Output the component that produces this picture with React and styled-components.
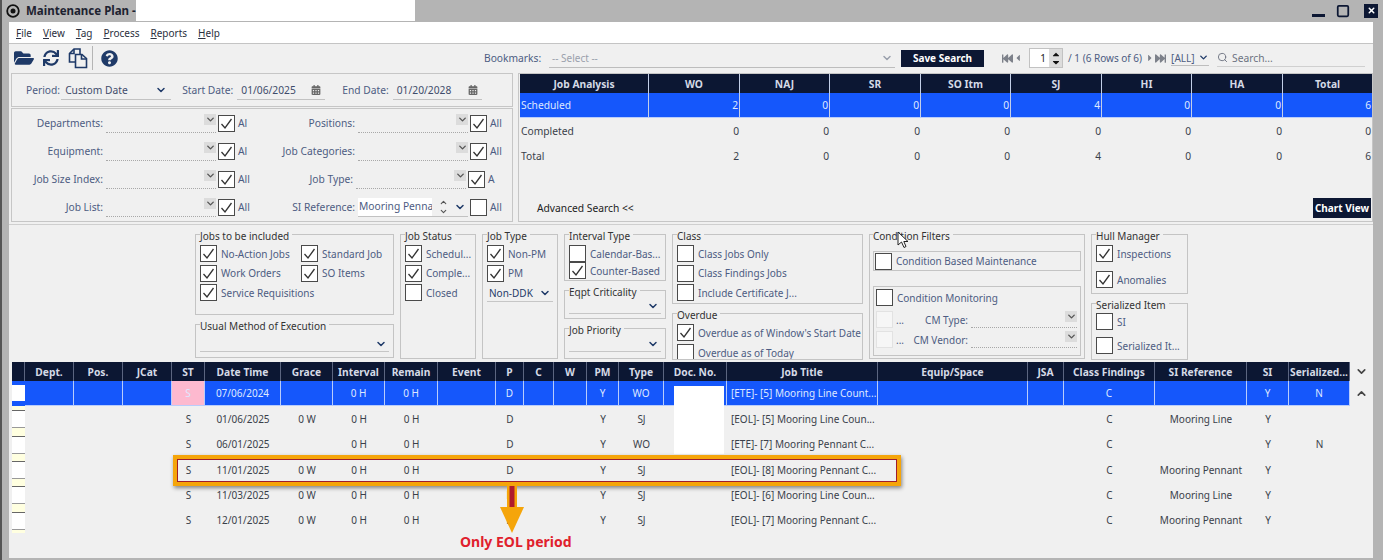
import React from "react";
import styled, { createGlobalStyle } from "styled-components";
import { FaFolderOpen, FaSync, FaQuestionCircle, FaCalendarAlt, FaFastBackward, FaFastForward, FaCaretLeft, FaCaretRight, FaCaretUp, FaCaretDown } from "react-icons/fa";
import { ChevronDown, ChevronUp, Search, Square, X } from "lucide-react";

const GlobalStyle = createGlobalStyle`
  html, body { margin: 0; padding: 0; background: #b4b4b4; }
  body { font-family: "Noto Sans", Arial, sans-serif; font-size: 10.25px; color: #3a3f4a; overflow: hidden; }
  * { box-sizing: border-box; }
`;

const NAVY = "#0c1733";
const LABEL = "#4d5c82";
const BLUE = "#1557fb";

const Page = styled.div`
  position: relative;
  width: 1383px;
  height: 560px;
  padding-left: 2px;
  background: #b4b4b4;
  box-shadow: inset 2px 0 0 #555;
  display: flex;
  flex-direction: column;
  overflow: hidden;
`;

const TitleBar = styled.div`
  height: 21px;
  display: flex;
  align-items: center;
  padding-left: 4px;
  font-weight: 700;
  font-size: 11.5px;
  color: #1d2230;
`;

const TitleText = styled.span`
  margin-left: 6px;
  width: 110px;
  white-space: nowrap;
`;

const Redacted = styled.div`
  width: 279px;
  height: 21px;
  background: #fff;
`;

const WindowButtons = styled.div`
  margin-left: auto;
  display: flex;
  align-items: center;
  color: ${NAVY};
`;

const MinButton = styled.div`
  width: 13px;
  height: 3px;
  margin: 9px 11px 0 0;
  background: ${NAVY};
`;

const CloseBtn = styled.div`
  width: 14px;
  height: 14px;
  background: ${NAVY};
  color: #fff;
  display: flex;
  align-items: center;
  justify-content: center;
  margin: 0 5px 0 14px;
`;

const Body = styled.div`
  flex: 1;
  margin: 1px 10px 2px 7px;
  background: #f0f0f0;
  display: flex;
  flex-direction: column;
  min-height: 0;
`;

const MenuBar = styled.div`
  height: 22px;
  flex-shrink: 0;
  background: #fff;
  display: flex;
  align-items: center;
  gap: 11px;
  padding-left: 7px;
  border-bottom: 1px solid #c4c4c4;
  color: #2b3040;
  font-size: 10px;
`;

const MenuItem = styled.span`
  &::first-letter { text-decoration: underline; }
`;

const Toolbar = styled.div`
  height: 28px;
  flex-shrink: 0;
  display: flex;
  align-items: center;
  padding-left: 4px;
  color: #1f3a68;
`;

const ToolIcon = styled.div`
  width: ${({ $w }) => $w}px;
  display: flex;
  align-items: center;
  justify-content: center;
`;

const ToolSep = styled.div`
  width: 1px;
  height: 24px;
  background: #b5b5b5;
  margin: 0 7px 0 3px;
`;

const BookmarkLabel = styled.span`
  margin-left: 366px;
  color: ${LABEL};
  width: 56px;
`;

const BookmarkSelect = styled.div`
  width: 346px;
  height: 20px;
  margin-left: 9px;
  display: flex;
  align-items: center;
  justify-content: space-between;
  padding: 0 2px 0 3px;
  border-bottom: 1px solid #bdbdbd;
  color: #9aa0ac;
  font-size: 10px;
`;

const NavyButton = styled.button`
  background: ${NAVY};
  color: #fff;
  border: none;
  font: 700 10px "Noto Sans", Arial, sans-serif;
  padding: 0;
  display: block;
  white-space: nowrap;
`;

const SaveButton = styled(NavyButton)`
  width: 83px;
  height: 17px;
  margin-left: 6px;
`;

const Pager = styled.div`
  display: flex;
  align-items: center;
  margin-left: 18px;
  color: #7d818a;
  white-space: nowrap;
`;

const PagerText = styled.span`
  color: ${LABEL};
  font-size: 10px;
`;

const PageSpin = styled.div`
  width: 34px;
  height: 20px;
  margin: 0 5px 0 6px;
  background: #fff;
  border: 1px solid #c2c2c2;
  display: flex;
  align-items: center;
  justify-content: flex-end;
  color: #222;
  font-size: 10px;
`;

const SpinArrows = styled.div`
  display: flex;
  flex-direction: column;
  width: 13px;
  height: 100%;
  margin-left: 3px;
  align-items: center;
  justify-content: center;
  line-height: 0;
  background: #dcdcdc;
`;

const AllSelect = styled.div`
  width: 38px;
  margin-left: 5px;
  display: flex;
  align-items: center;
  justify-content: space-between;
  border-bottom: 1px solid #bdbdbd;
  color: ${LABEL};
  font-size: 10px;
`;

const AllChevron = styled.span`
  display: flex;
  color: #1f3a68;
`;

const SearchBox = styled.div`
  width: 148px;
  height: 18px;
  margin-left: 8px;
  display: flex;
  align-items: center;
  gap: 4px;
  border-bottom: 1px solid #d0d0d0;
  color: #6c7280;
`;

const TopSection = styled.div`
  height: 153px;
  flex-shrink: 0;
  display: flex;
  align-items: flex-start;
  padding: 1px 0 0 2px;
  gap: 5px;
  border-bottom: 1px solid #cfcfcf;
`;

const LeftColumn = styled.div`
  width: 502px;
  flex-shrink: 0;
  display: flex;
  flex-direction: column;
  gap: 1px;
`;

const PeriodPanel = styled.div`
  height: 34px;
  border: 1px solid #c6c6c6;
  display: flex;
  align-items: center;
  padding-left: 14px;
  color: ${LABEL};
  white-space: nowrap;
`;

const UnderlineField = styled.div`
  width: ${({ $w }) => $w}px;
  margin: 0 ${({ $after }) => $after || 0}px 0 ${({ $before }) => $before ?? 4}px;
  height: 19px;
  display: flex;
  align-items: center;
  justify-content: space-between;
  padding: 0 4px;
  border-bottom: 1px solid #c2c2c2;
  color: #3f4c6b;
`;

const FilterPanel = styled.div`
  height: 114px;
  border: 1px solid #c6c6c6;
  display: grid;
  grid-auto-rows: 28px;
`;

const FilterRow = styled.div`
  display: flex;
  align-items: center;
`;

const Pair = styled.div`
  width: ${({ $w }) => $w}px;
  display: flex;
  align-items: center;
  white-space: nowrap;
`;

const FilterLabel = styled.span`
  width: ${({ $w }) => $w}px;
  text-align: right;
  color: ${LABEL};
  flex-shrink: 0;
`;

const Combo = styled.div`
  width: 110px;
  height: 19px;
  margin: 0 2px 0 3px;
  display: flex;
  justify-content: flex-end;
  border-bottom: 1px dotted #a8a8a8;
  flex-shrink: 0;
`;

const ChevronChip = styled.div`
  width: 12px;
  height: 11px;
  background: #dcdcdc;
  color: #555;
  display: flex;
  align-items: center;
  justify-content: center;
`;

const RefInput = styled.div`
  width: 110px;
  height: 19px;
  margin: 0 2px 0 3px;
  display: flex;
  align-items: center;
  border-bottom: 1px solid #c2c2c2;
  color: #1f3a68;
  flex-shrink: 0;
`;

const RefText = styled.div`
  width: 74px;
  height: 18px;
  background: #fff;
  color: ${LABEL};
  line-height: 16px;
  padding-left: 1px;
  overflow: hidden;
`;

const RefSpin = styled.div`
  width: 22px;
  display: flex;
  flex-direction: column;
  align-items: center;
  color: #555;
  line-height: 0;
`;

const Box = styled.span`
  width: 17px;
  height: 17px;
  flex-shrink: 0;
  background: ${({ $off }) => ($off ? "#f6f6f6" : "#fff")};
  border: 1px solid ${({ $off }) => ($off ? "#e2e2e2" : "#4a4a4a")};
  display: inline-flex;
  align-items: center;
  justify-content: center;
`;

const Check = ({ on, off }) => (
  <Box $off={off}>
    {on && (
      <svg width="13" height="13" viewBox="0 0 13 13">
        <path d="M1.5 7 L5 11 L11.5 2" fill="none" stroke="#333" strokeWidth="1.3" />
      </svg>
    )}
  </Box>
);

const AllText = styled.span`
  margin-left: ${({ $gap }) => $gap ?? 3}px;
  color: ${LABEL};
`;

const JobPanel = styled.div`
  width: 855px;
  height: 149px;
  border: 1px solid #c6c6c6;
  padding: 0 0 0 1px;
  display: flex;
  flex-direction: column;
`;

const AnalysisRow = styled.div`
  display: grid;
  grid-template-columns: 129px 91px 90px 91px 90px 91px 90px 91px 89px;
  height: ${({ $h }) => $h}px;
  background: ${({ $bg }) => $bg || "transparent"};
  color: ${({ $color }) => $color || "#3a3f4a"};
  ${({ $bar }) => $bar && `border-bottom: 1px solid #b9cdfb;`}
`;

const AnalysisCell = styled.div`
  display: flex;
  align-items: center;
  justify-content: ${({ $align }) => $align};
  font-weight: ${({ $bold }) => ($bold ? 700 : 400)};
  padding: 0 1px;
  border-right: ${({ $line }) => ($line ? "1px solid #c3cfe8" : "none")};
`;

const AnalysisFoot = styled.div`
  margin-top: auto;
  height: 23px;
  display: flex;
  align-items: center;
  justify-content: space-between;
  padding: 0 1px 3px 17px;
  color: #222;
`;

const ChartButton = styled(NavyButton)`
  width: 58px;
  height: 20px;
`;

const FilterSection = styled.div`
  height: 137px;
  flex-shrink: 0;
  padding-left: 186px;
  display: flex;
  gap: 6px;
  overflow: hidden;
`;

const Column = styled.div`
  width: ${({ $w }) => $w}px;
  flex-shrink: 0;
  display: flex;
  flex-direction: column;
`;

const Group = styled.fieldset`
  margin: 0;
  padding: 0 ${({ $pad }) => $pad ?? 4}px;
  min-width: 0;
  width: ${({ $w }) => ($w ? `${$w}px` : "100%")};
  height: ${({ $h }) => $h}px;
  border: 1px solid #c4c4c4;
  flex-shrink: 0;
  overflow: hidden;
  & > legend {
    padding: 4px 3px 0 0;
    font-size: 10px;
    line-height: 14px;
    color: #333;
    white-space: nowrap;
  }
`;

const CheckRows = styled.div`
  display: grid;
  grid-template-columns: ${({ $cols }) => $cols || "1fr"};
  row-gap: ${({ $gap }) => $gap ?? 2.5}px;
  margin-top: ${({ $top }) => $top ?? 2}px;
`;

const CheckItem = styled.div`
  display: flex;
  align-items: center;
  gap: 4px;
  color: ${LABEL};
  white-space: nowrap;
  font-size: 10px;
  ${({ $wide }) => $wide && `grid-column: 1 / -1;`}
`;

const GroupSelect = styled.div`
  height: 15px;
  margin-top: ${({ $top }) => $top || 0}px;
  display: flex;
  align-items: center;
  justify-content: ${({ $between }) => ($between ? "space-between" : "flex-end")};
  border-bottom: 1px solid #c6c6c6;
  color: #1f3a68;
  font-size: 10px;
  padding: 0 2px 1px;
`;

const InnerBox = styled.div`
  border: 1px solid #c4c4c4;
  height: ${({ $h }) => $h}px;
  margin-top: ${({ $top }) => $top || 0}px;
  display: ${({ $flex }) => ($flex ? "flex" : "block")};
  align-items: center;
  gap: 4px;
  padding: ${({ $pad }) => $pad || 0};
  color: ${LABEL};
  font-size: 10px;
`;

const CmRow = styled.div`
  display: flex;
  align-items: center;
  margin-top: ${({ $top }) => $top || 0}px;
`;

const CmLabel = styled.span`
  width: 57px;
  flex-shrink: 0;
  text-align: right;
  margin-right: 3px;
  white-space: nowrap;
`;

const CmDots = styled.span`
  margin-left: 3px;
  width: 15px;
  flex-shrink: 0;
`;

const CmCombo = styled.div`
  width: 106px;
  height: 17px;
  flex-shrink: 0;
  display: flex;
  justify-content: flex-end;
  border-bottom: 1px dotted #a8a8a8;
`;

const GridWrap = styled.div`
  flex: 1;
  margin-left: 3px;
  display: flex;
  min-height: 0;
`;

const GridMain = styled.div`
  width: 1339px;
`;

const Row = styled.div`
  display: grid;
  grid-template-columns: 13px 49px 49px 49px 33px 76px 52px 52px 53px 58px 28px 30px 33px 32px 45px 63px 151px 150px 36px 91px 92px 42px 61px;
  height: ${({ $h }) => $h};
  background: ${({ $bg }) => $bg || "transparent"};
  color: ${({ $color }) => $color || "#3a3f4a"};
`;

const HeadCell = styled.div`
  display: flex;
  align-items: center;
  justify-content: center;
  font-weight: 700;
  font-size: 10.25px;
  color: #d5dae6;
  white-space: nowrap;
  overflow: hidden;
  border-right: 1px solid #5b6580;
`;

const Cell = styled.div`
  display: flex;
  align-items: center;
  justify-content: ${({ $left }) => ($left ? "flex-start" : "center")};
  padding-left: ${({ $left }) => ($left ? 4 : 0)}px;
  white-space: nowrap;
  font-size: 10px;
  background: ${({ $bg }) => $bg || "transparent"};
  border-right: ${({ $sel }) => ($sel ? "1px solid #b9cdfb" : "none")};
  border-bottom: ${({ $sel }) => ($sel ? "1px solid #b9cdfb" : "none")};
`;

const RowMark = styled.div`
  background: ${({ $sel }) =>
    $sel
      ? `linear-gradient(#1557fb 0 4px, #fff 4px 20px, #1557fb 20px)`
      : `linear-gradient(#ffffe0 0 4px, #666 4px 5px, #fff 5px 21px, #999 21px 22px, #ffffe0 22px)`};
`;

const ScrollColumn = styled.div`
  width: 23px;
  display: flex;
  flex-direction: column;
  color: #444;
`;

const ScrollBtn = styled.div`
  height: ${({ $h }) => $h}px;
  display: flex;
  align-items: center;
  justify-content: center;
`;

const Highlight = styled.div`
  position: absolute;
  left: 173px;
  top: 455px;
  width: 728px;
  height: 31px;
  border: 4px solid #f5a50a;
  outline: 1px solid #a01c2c;
  outline-offset: -5px;
  box-shadow: 1px 2px 4px rgba(0, 0, 0, 0.45);
`;

const ArrowMark = styled.svg`
  position: absolute;
  left: 498px;
  top: 486px;
`;

const Callout = styled.div`
  position: absolute;
  left: 460px;
  top: 532px;
  color: #e0202c;
  font-weight: 700;
  font-size: 14px;
  line-height: 20px;
  white-space: nowrap;
`;

const Whiteout = styled.div`
  position: absolute;
  left: 674px;
  top: 386px;
  width: 50px;
  height: 68px;
  background: #fff;
`;

const Cursor = styled.svg`
  position: absolute;
  left: 897px;
  top: 231px;
`;

const chev = (size = 12) => <ChevronDown size={size} strokeWidth={3} />;

const CopyIcon = () => (
  <svg width="20" height="22" viewBox="0 0 20 22" fill="none" stroke="#1f3a68" strokeWidth="1.600">
    <path d="M7 15H1.500V6.500L6 2H12V7" />
    <path d="M6 2V6.500H1.500" />
    <path d="M7.500 7.500H14L18.500 11.500V20.500H7.500Z" />
    <path d="M13.500 7.500V12H18.500" />
  </svg>
);

const analysisHead = ["Job Analysis", "WO", "NAJ", "SR", "SO Itm", "SJ", "HI", "HA", "Total"];
const analysisRows = [
  ["Scheduled", 2, 0, 0, 0, 4, 0, 0, 6],
  ["Completed", 0, 0, 0, 0, 0, 0, 0, 0],
  ["Total", 2, 0, 0, 0, 4, 0, 0, 6],
];

const columns = ["", "Dept.", "Pos.", "JCat", "ST", "Date Time", "Grace", "Interval", "Remain", "Event", "P", "C", "W", "PM", "Type", "Doc. No.", "Job Title", "Equip/Space", "JSA", "Class Findings", "SI Reference", "SI", "Serialized..."];

const rows = [
  { date: "07/06/2024", grace: "", type: "WO", title: "[ETE]- [5] Mooring Line Count...", ref: "", ser: "N" },
  { date: "01/06/2025", grace: "0 W", type: "SJ", title: "[EOL]- [5] Mooring Line Coun...", ref: "Mooring Line", ser: "" },
  { date: "06/01/2025", grace: "", type: "WO", title: "[ETE]- [7] Mooring Pennant C...", ref: "", ser: "N" },
  { date: "11/01/2025", grace: "0 W", type: "SJ", title: "[EOL]- [8] Mooring Pennant C...", ref: "Mooring Pennant", ser: "" },
  { date: "11/03/2025", grace: "0 W", type: "SJ", title: "[EOL]- [6] Mooring Line Coun...", ref: "Mooring Line", ser: "" },
  { date: "12/01/2025", grace: "0 W", type: "SJ", title: "[EOL]- [7] Mooring Pennant C...", ref: "Mooring Pennant", ser: "" },
];

const FilterPair = ({ label, w, text, on = true, pairW }) => (
  <Pair $w={pairW}>
    <FilterLabel $w={w}>{label}</FilterLabel>
    <Combo><ChevronChip>{chev(11)}</ChevronChip></Combo>
    <Check on={on} />
    <AllText>{text}</AllText>
  </Pair>
);

const Item = ({ label, on, wide }) => (
  <CheckItem $wide={wide}><Check on={on} />{label}</CheckItem>
);

const App = () => {
  return (
    <Page>
      <GlobalStyle />
      <TitleBar>
        <svg width="14" height="14" viewBox="0 0 14 14">
          <circle cx="7" cy="7" r="5.800" fill="none" stroke="#111" strokeWidth="1.800" />
          <circle cx="7" cy="7" r="2.500" fill="#111" />
        </svg>
        <TitleText>Maintenance Plan -</TitleText>
        <Redacted />
        <WindowButtons>
          <MinButton />
          <Square size={14} strokeWidth={3} />
          <CloseBtn><X size={9} strokeWidth={4} /></CloseBtn>
        </WindowButtons>
      </TitleBar>
      <Body>
        <MenuBar>
          {["File", "View", "Tag", "Process", "Reports", "Help"].map((m) => (
            <MenuItem key={m}>{m}</MenuItem>
          ))}
        </MenuBar>
        <Toolbar>
          <ToolIcon $w={22}><FaFolderOpen size={20} /></ToolIcon>
          <ToolIcon $w={32}><FaSync size={16} /></ToolIcon>
          <ToolIcon $w={22}><CopyIcon /></ToolIcon>
          <ToolSep />
          <ToolIcon $w={18}><FaQuestionCircle size={17} /></ToolIcon>
          <BookmarkLabel>Bookmarks:</BookmarkLabel>
          <BookmarkSelect>-- Select --{chev(12)}</BookmarkSelect>
          <SaveButton>Save Search</SaveButton>
          <Pager>
            <FaFastBackward size={11} />
            <FaCaretLeft size={10} />
            <PageSpin>
              1
              <SpinArrows><FaCaretUp size={12} style={{ marginBottom: -3, color: "#111" }} /><FaCaretDown size={12} style={{ color: "#111" }} /></SpinArrows>
            </PageSpin>
            <PagerText>/ 1 (6 Rows of 6)</PagerText>
            <FaCaretRight size={10} style={{ marginLeft: 3 }} />
            <FaFastForward size={11} />
            <AllSelect>[ALL]<AllChevron>{chev(11)}</AllChevron></AllSelect>
          </Pager>
          <SearchBox><Search size={11} />Search...</SearchBox>
        </Toolbar>
        <TopSection>
          <LeftColumn>
            <PeriodPanel>
              Period:
              <UnderlineField $w={110} $after={11} $before={1}>Custom Date<ChevronDown size={12} strokeWidth={3} color="#1f3a68" /></UnderlineField>
              Start Date:
              <UnderlineField $w={88} $after={17}>01/06/2025<FaCalendarAlt size={10} color="#666" /></UnderlineField>
              End Date:
              <UnderlineField $w={89}>01/20/2028<FaCalendarAlt size={10} color="#666" /></UnderlineField>
            </PeriodPanel>
            <FilterPanel>
              <FilterRow>
                <FilterPair label="Departments:" w={91} text="Al" pairW={246} />
                <FilterPair label="Positions:" w={97} text="All" pairW={250} />
              </FilterRow>
              <FilterRow>
                <FilterPair label="Equipment:" w={91} text="Al" pairW={246} />
                <FilterPair label="Job Categories:" w={97} text="All" pairW={250} />
              </FilterRow>
              <FilterRow>
                <FilterPair label="Job Size Index:" w={91} text="All" pairW={246} />
                <FilterPair label="Job Type:" w={95} text="A" pairW={250} />
              </FilterRow>
              <FilterRow>
                <FilterPair label="Job List:" w={91} text="All" pairW={246} />
                <Pair $w={250}>
                  <FilterLabel $w={97}>SI Reference:</FilterLabel>
                  <RefInput>
                    <RefText>Mooring Penna</RefText>
                    <RefSpin><ChevronUp size={9} strokeWidth={3} /><ChevronDown size={9} strokeWidth={3} /></RefSpin>
                    {chev(12)}
                  </RefInput>
                  <Check />
                  <AllText>All</AllText>
                </Pair>
              </FilterRow>
            </FilterPanel>
          </LeftColumn>
          <JobPanel>
            <AnalysisRow $h={19} $bg={NAVY} $color="#d5dae6">
              {analysisHead.map((h, i) => (
                <AnalysisCell key={h} $align="center" $bold $line={i < 8}>{h}</AnalysisCell>
              ))}
            </AnalysisRow>
            {analysisRows.map((r, ri) => (
              <AnalysisRow key={r[0]} $h={25} $bg={ri === 0 ? BLUE : undefined} $color={ri === 0 ? "#dfe8ff" : undefined} $bar={ri === 0}>
                {r.map((v, i) => (
                  <AnalysisCell key={i} $align={i === 0 ? "flex-start" : "flex-end"} $line={ri === 0 && i < 8}>{v}</AnalysisCell>
                ))}
              </AnalysisRow>
            ))}
            <AnalysisFoot>
              Advanced Search &lt;&lt;
              <ChartButton>Chart View</ChartButton>
            </AnalysisFoot>
          </JobPanel>
        </TopSection>
        <FilterSection>
          <Column $w={199}>
            <Group $h={90}>
              <legend>Jobs to be included</legend>
              <CheckRows $cols="101px 1fr">
                <Item label="No-Action Jobs" on />
                <Item label="Standard Job" on />
                <Item label="Work Orders" on />
                <Item label="SO Items" on />
                <Item label="Service Requisitions" on wide />
              </CheckRows>
            </Group>
            <Group $h={43}>
              <legend>Usual Method of Execution</legend>
              <GroupSelect $top={4}>{chev(12)}</GroupSelect>
            </Group>
          </Column>
          <Group $w={76} $h={134}>
            <legend>Job Status</legend>
            <CheckRows>
              <Item label="Schedul..." on />
              <Item label="Comple..." on />
              <Item label="Closed" />
            </CheckRows>
          </Group>
          <Group $w={76} $h={134}>
            <legend>Job Type</legend>
            <CheckRows>
              <Item label="Non-PM" on />
              <Item label="PM" on />
            </CheckRows>
            <GroupSelect $between $top={5}>Non-DDK{chev(12)}</GroupSelect>
          </Group>
          <Column $w={102}>
            <Group $h={56}>
              <legend>Interval Type</legend>
              <CheckRows $gap={0}>
                <Item label="Calendar-Bas..." />
                <Item label="Counter-Based" on />
              </CheckRows>
            </Group>
            <Group $h={38}>
              <legend>Eqpt Criticality</legend>
              <GroupSelect>{chev(12)}</GroupSelect>
            </Group>
            <Group $h={40}>
              <legend>Job Priority</legend>
              <GroupSelect>{chev(12)}</GroupSelect>
            </Group>
          </Column>
          <Column $w={191}>
            <Group $h={79}>
              <legend>Class</legend>
              <CheckRows>
                <Item label="Class Jobs Only" />
                <Item label="Class Findings Jobs" />
                <Item label="Include Certificate J..." />
              </CheckRows>
            </Group>
            <Group $h={56}>
              <legend>Overdue</legend>
              <CheckRows $gap={3} $top={2}>
                <Item label="Overdue as of Window's Start Date" on />
                <Item label="Overdue as of Today" />
              </CheckRows>
            </Group>
          </Column>
          <Group $w={216} $h={134} $pad={3}>
            <legend>Condition Filters</legend>
            <InnerBox $h={20} $top={8} $flex $pad="0 0 0 1px">
              <Check />Condition Based Maintenance
            </InnerBox>
            <InnerBox $h={70} $top={15} $pad="2px 0 0 2px">
              <CmRow><Check /><AllText $gap={4}>Condition Monitoring</AllText></CmRow>
              <CmRow $top={5}>
                <Check off /><CmDots>...</CmDots>
                <CmLabel>CM Type:</CmLabel>
                <CmCombo><ChevronChip>{chev(11)}</ChevronChip></CmCombo>
              </CmRow>
              <CmRow $top={3}>
                <Check off /><CmDots>...</CmDots>
                <CmLabel>CM Vendor:</CmLabel>
                <CmCombo><ChevronChip>{chev(11)}</ChevronChip></CmCombo>
              </CmRow>
            </InnerBox>
          </Group>
          <Column $w={97}>
            <Group $h={69}>
              <legend>Hull Manager</legend>
              <CheckRows $gap={9}>
                <Item label="Inspections" on />
                <Item label="Anomalies" on />
              </CheckRows>
            </Group>
            <Group $h={66}>
              <legend>Serialized Item</legend>
              <CheckRows $gap={7} $top={1}>
                <Item label="SI" />
                <Item label="Serialized It..." />
              </CheckRows>
            </Group>
          </Column>
        </FilterSection>
        <GridWrap>
          <GridMain>
            <Row $h="19px" $bg={NAVY}>
              {columns.map((c, i) => (
                <HeadCell key={i}>{c}</HeadCell>
              ))}
            </Row>
            {rows.map((r, i) => {
              const sel = i === 0;
              const values = ["", "", "", "S", r.date, r.grace, "0 H", "0 H", "", "D", "", "", "Y", r.type, "", r.title, "", "", "C", r.ref, "Y", r.ser];
              return (
                <Row key={i} $h="25.330px" $bg={sel ? BLUE : undefined} $color={sel ? "#dfe8ff" : undefined}>
                  <RowMark $sel={sel} />
                  {values.map((v, j) => (
                    <Cell key={j} $sel={sel} $left={j === 15} $bg={sel && j === 3 ? "#fdb9cf" : undefined}>{v}</Cell>
                  ))}
                </Row>
              );
            })}
          </GridMain>
          <ScrollColumn>
            <ScrollBtn $h={19}><ChevronDown size={13} strokeWidth={3} /></ScrollBtn>
            <ScrollBtn $h={25}><ChevronUp size={13} strokeWidth={3} /></ScrollBtn>
          </ScrollColumn>
        </GridWrap>
      </Body>
      <Whiteout />
      <Highlight />
      <ArrowMark width="28" height="48" viewBox="0 0 28 48">
        <rect x="9" y="0" width="10" height="24" fill="#f5a50a" />
        <rect x="11.500" y="0" width="5" height="24" fill="#b01c2c" />
        <path d="M2 21H26L14 47Z" fill="#f5a50a" />
      </ArrowMark>
      <Callout>Only EOL period</Callout>
      <Cursor width="13" height="18" viewBox="0 0 13 18">
        <path d="M1 1V14L4.500 11L7 16.500L9 15.500L6.800 10.500H11Z" fill="#fff" stroke="#222" strokeWidth="1" />
      </Cursor>
    </Page>
  );
};

export default App;
